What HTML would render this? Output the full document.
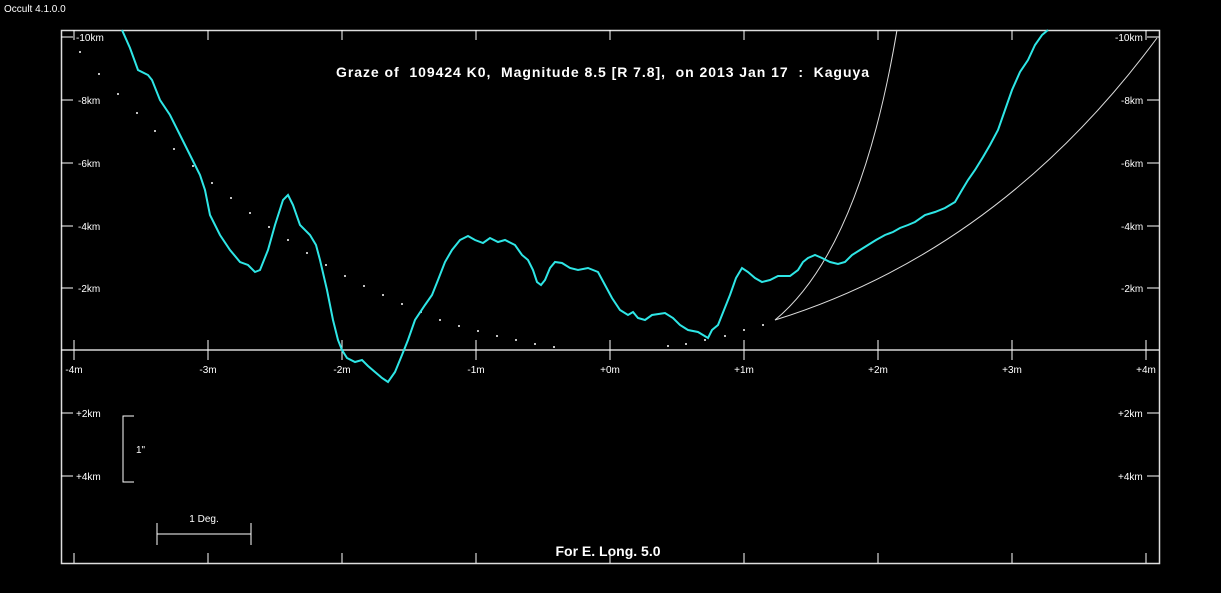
<!DOCTYPE html>
<html><head><style>
html,body{margin:0;padding:0;background:#000;width:1221px;height:593px;overflow:hidden}
svg{display:block}
text{font-family:"Liberation Sans",Arial,sans-serif;fill:#fff;white-space:pre}
</style></head><body>
<svg width="1221" height="593" viewBox="0 0 1221 593">
<text x="4" y="12" font-size="10">Occult 4.1.0.0</text>
<rect x="61.5" y="30.5" width="1098" height="533" fill="none" stroke="#ddd" stroke-width="1.5"/>
<line x1="61" y1="350" x2="1159" y2="350" stroke="#fff" stroke-width="1.2"/>
<g stroke="#fff" stroke-width="1">
<line x1="74" y1="30" x2="74" y2="40"/><line x1="208" y1="30" x2="208" y2="40"/><line x1="342" y1="30" x2="342" y2="40"/><line x1="476" y1="30" x2="476" y2="40"/><line x1="610" y1="30" x2="610" y2="40"/><line x1="744" y1="30" x2="744" y2="40"/><line x1="878" y1="30" x2="878" y2="40"/><line x1="1012" y1="30" x2="1012" y2="40"/><line x1="1146" y1="30" x2="1146" y2="40"/>
<line x1="74" y1="340" x2="74" y2="360"/><line x1="208" y1="340" x2="208" y2="360"/><line x1="342" y1="340" x2="342" y2="360"/><line x1="476" y1="340" x2="476" y2="360"/><line x1="610" y1="340" x2="610" y2="360"/><line x1="744" y1="340" x2="744" y2="360"/><line x1="878" y1="340" x2="878" y2="360"/><line x1="1012" y1="340" x2="1012" y2="360"/><line x1="1146" y1="340" x2="1146" y2="360"/>
<line x1="74" y1="553" x2="74" y2="563"/><line x1="208" y1="553" x2="208" y2="563"/><line x1="342" y1="553" x2="342" y2="563"/><line x1="476" y1="553" x2="476" y2="563"/><line x1="610" y1="553" x2="610" y2="563"/><line x1="744" y1="553" x2="744" y2="563"/><line x1="878" y1="553" x2="878" y2="563"/><line x1="1012" y1="553" x2="1012" y2="563"/><line x1="1146" y1="553" x2="1146" y2="563"/>
<line x1="61" y1="37" x2="73" y2="37"/><line x1="61" y1="100" x2="73" y2="100"/><line x1="61" y1="163" x2="73" y2="163"/><line x1="61" y1="226" x2="73" y2="226"/><line x1="61" y1="288" x2="73" y2="288"/><line x1="61" y1="413" x2="73" y2="413"/><line x1="61" y1="476" x2="73" y2="476"/>
<line x1="1147" y1="37" x2="1159" y2="37"/><line x1="1147" y1="100" x2="1159" y2="100"/><line x1="1147" y1="163" x2="1159" y2="163"/><line x1="1147" y1="226" x2="1159" y2="226"/><line x1="1147" y1="288" x2="1159" y2="288"/><line x1="1147" y1="413" x2="1159" y2="413"/><line x1="1147" y1="476" x2="1159" y2="476"/>
<polyline points="134,416 123,416 123,482 134,482" fill="none"/>
<line x1="157" y1="534" x2="251" y2="534"/><line x1="157" y1="523" x2="157" y2="545"/><line x1="251" y1="523" x2="251" y2="545"/>
</g>
<g font-size="10">
<text x="76" y="41">-10km</text><text x="78" y="104">-8km</text><text x="78" y="167">-6km</text><text x="78" y="230">-4km</text><text x="78" y="292">-2km</text><text x="76" y="417">+2km</text><text x="76" y="480">+4km</text>
<text x="1115" y="41">-10km</text><text x="1121" y="104">-8km</text><text x="1121" y="167">-6km</text><text x="1121" y="230">-4km</text><text x="1121" y="292">-2km</text><text x="1118" y="417">+2km</text><text x="1118" y="480">+4km</text>
<g text-anchor="middle"><text x="74" y="373">-4m</text><text x="208" y="373">-3m</text><text x="342" y="373">-2m</text><text x="476" y="373">-1m</text><text x="610" y="373">+0m</text><text x="744" y="373">+1m</text><text x="878" y="373">+2m</text><text x="1012" y="373">+3m</text><text x="1146" y="373">+4m</text>
<text x="204" y="522">1 Deg.</text></g>
<text x="136" y="453">1"</text>
</g>
<text x="336" y="77" font-size="14" font-weight="bold" textLength="533" lengthAdjust="spacing">Graze of  109424 K0,  Magnitude 8.5 [R 7.8],  on 2013 Jan 17  :  Kaguya</text>
<text x="608" y="556" font-size="14" font-weight="bold" text-anchor="middle">For E. Long. 5.0</text>
<g fill="#fff">
<circle cx="80" cy="52" r="1"/><circle cx="99" cy="74" r="1"/><circle cx="118" cy="94" r="1"/><circle cx="137" cy="113" r="1"/><circle cx="155" cy="131" r="1"/><circle cx="174" cy="149" r="1"/><circle cx="193" cy="166" r="1"/><circle cx="212" cy="183" r="1"/><circle cx="231" cy="198" r="1"/><circle cx="250" cy="213" r="1"/><circle cx="269" cy="227" r="1"/><circle cx="288" cy="240" r="1"/><circle cx="307" cy="253" r="1"/><circle cx="326" cy="265" r="1"/><circle cx="345" cy="276" r="1"/><circle cx="364" cy="286" r="1"/><circle cx="383" cy="295" r="1"/><circle cx="402" cy="304" r="1"/><circle cx="421" cy="312" r="1"/><circle cx="440" cy="320" r="1"/><circle cx="459" cy="326" r="1"/><circle cx="478" cy="331" r="1"/><circle cx="497" cy="336" r="1"/><circle cx="516" cy="340" r="1"/><circle cx="535" cy="344" r="1"/><circle cx="554" cy="347" r="1"/><circle cx="668" cy="346" r="1"/><circle cx="686" cy="344" r="1"/><circle cx="705" cy="340" r="1"/><circle cx="725" cy="336" r="1"/><circle cx="744" cy="330" r="1"/><circle cx="763" cy="325" r="1"/>
</g>
<path d="M775,320 Q860,250 897,30" fill="none" stroke="#ddd" stroke-width="1"/>
<path d="M775,320 Q1000,250 1157,38" fill="none" stroke="#ddd" stroke-width="1"/>
<polyline fill="none" stroke="#2ee6e6" stroke-width="2" points="122,30 130,48 138,70 148,75 152,80 160,100 170,115 180,135 190,155 200,175 205,190 210,215 220,235 230,250 240,262 248,265 255,272 260,270 268,250 275,225 283,200 288,195 293,205 300,225 310,235 316,245 320,260 327,290 333,320 338,340 342,350 347,358 355,362 362,360 368,366 375,372 382,378 388,382 395,372 402,355 408,340 415,320 425,305 432,295 438,280 445,262 452,250 460,240 468,236 475,240 483,243 490,238 498,242 505,240 515,245 522,255 528,260 533,270 537,282 541,285 545,280 550,268 555,262 562,263 570,268 578,270 588,268 598,272 605,285 612,298 620,310 628,315 633,312 638,318 645,320 652,315 665,313 673,318 680,325 688,330 698,332 703,335 708,338 712,330 718,325 724,310 730,295 736,278 742,268 748,272 755,278 762,282 770,280 778,276 790,276 798,270 803,262 808,258 815,255 822,258 830,262 838,264 845,262 852,255 860,250 868,245 876,240 885,235 893,232 900,228 908,225 915,222 925,215 935,212 945,208 955,202 962,190 968,180 975,170 983,157 990,145 998,130 1005,110 1012,90 1020,72 1028,60 1035,45 1042,35 1048,30"/>
</svg>
</body></html>
